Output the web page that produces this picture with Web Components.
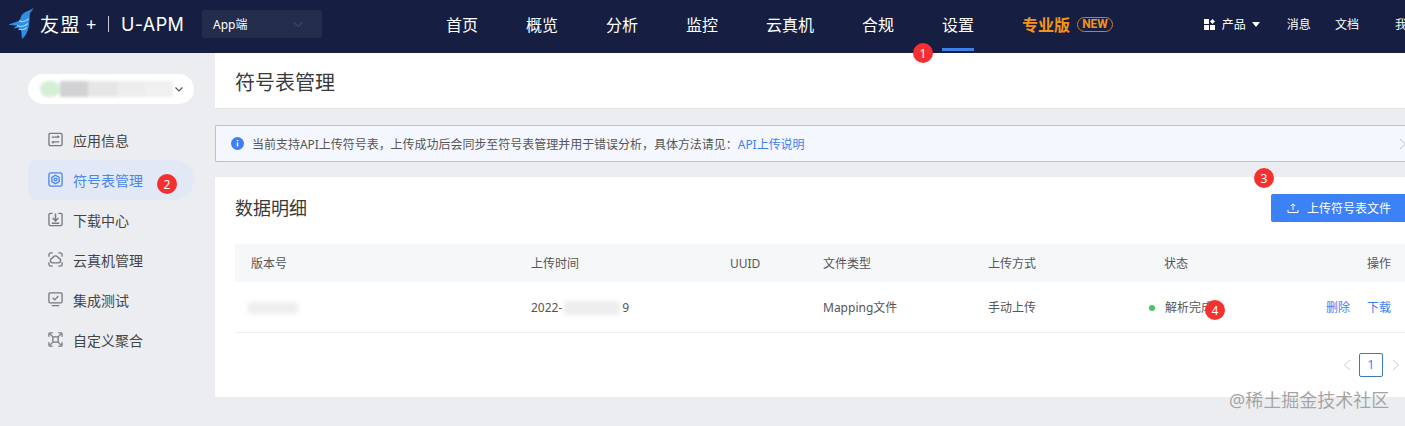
<!DOCTYPE html>
<html lang="zh">
<head>
<meta charset="utf-8">
<title>符号表管理</title>
<style>
  html, body { margin: 0; height: 426px; overflow: hidden; background: #ecedf1; }
  body { position: relative; font-family: "Noto Sans", "Noto Sans CJK SC", sans-serif; color: #333; }
  .layout { display: flex; height: 373px; }
</style>
</head>
<body>
<top-bar></top-bar>
<div class="layout">
  <side-nav>
    <side-item icon="info">应用信息</side-item>
    <side-item icon="symbol" active>符号表管理</side-item>
    <side-item icon="download">下载中心</side-item>
    <side-item icon="cloud">云真机管理</side-item>
    <side-item icon="test">集成测试</side-item>
    <side-item icon="custom">自定义聚合</side-item>
  </side-nav>
  <main-panel>
    <page-head>符号表管理</page-head>
    <info-alert>当前支持API上传符号表，上传成功后会同步至符号表管理并用于错误分析，具体方法请见：<a slot="link">API上传说明</a></info-alert>
    <data-card></data-card>
  </main-panel>
</div>
<num-badge style="left:913px;top:43px">1</num-badge>
<num-badge style="left:157px;top:174px">2</num-badge>
<num-badge style="left:1254px;top:168px">3</num-badge>
<num-badge style="left:1205px;top:300px">4</num-badge>
<water-mark>@稀土掘金技术社区</water-mark>

<script>
const ICONS = {
  info: '<rect x="1" y="1.500" width="14" height="13" rx="1.500"/><path d="M4 5.500h8M10 4l2 1.500M4 10.500h8M6 12l-2-1.500"/>',
  symbol: '<rect x="1" y="1" width="14" height="14" rx="2"/><path d="M8 3.500l3.900 2.250v4.500L8 12.500l-3.900-2.250v-4.500z"/><circle cx="8" cy="8" r="1.500"/>',
  download: '<path d="M5 1.500H2.500a1.500 1.500 0 0 0-1.500 1.500v10a1.500 1.500 0 0 0 1.500 1.500h11A1.500 1.500 0 0 0 15 13V3a1.500 1.500 0 0 0-1.500-1.500H11"/><path d="M8 1.500v7.500M5 6.500 8 9.500l3-3M4 12h8" stroke-width="1.600"/>',
  cloud: '<path d="M1 5V3a2 2 0 0 1 2-2h2M11 1h2a2 2 0 0 1 2 2v2M15 11v2a2 2 0 0 1-2 2h-2M5 15H3a2 2 0 0 1-2-2v-2"/><path d="M5.300 11.500a2.500 2.500 0 0 1-.4-5 3.200 3.200 0 0 1 6.200 0 2.500 2.500 0 0 1-.4 5z"/>',
  test: '<rect x="1" y="1" width="14" height="10.500" rx="1"/><path d="M5 6.200 7.200 8.400 11 4.300M4 14.500h8"/>',
  custom: '<path d="M1 5V2a1 1 0 0 1 1-1h3M11 1h3a1 1 0 0 1 1 1v3M15 11v3a1 1 0 0 1-1 1h-3M5 15H2a1 1 0 0 1-1-1v-3"/><rect x="5.200" y="5.200" width="5.600" height="5.600" rx=".8"/><path d="M2 2l3.200 3.200M14 2l-3.200 3.200M14 14l-3.200-3.200M2 14l3.200-3.200"/>'
};

class TopBar extends HTMLElement {
  connectedCallback() {
    this.attachShadow({ mode: 'open' });
    this.shadowRoot.innerHTML = `
      <style>
        :host { display: flex; align-items: center; box-sizing: border-box; height: 53px; background: #161f41; color: #fff; padding: 0 0 5px 8px; overflow: hidden; white-space: nowrap; }
        .bird { width: 28px; height: 31px; flex: none; margin-bottom: 1px; }
        .brand { flex: none; font-size: 19px; margin-left: 4px; letter-spacing: 1.500px; width: 43px; }
        .plus { flex: none; font-size: 18px; margin-left: 3px; width: 22px; }
        .line { flex: none; width: 1px; height: 16px; background: #c9ccd6; }
        .prod { flex: none; font-family: Inter, sans-serif; font-size: 18px; margin-left: 12px; width: 64px; letter-spacing: .4px; }
        .select { flex: none; display: flex; align-items: center; justify-content: space-between; box-sizing: border-box; width: 120px; height: 28px; margin: 0 0 1px 17px; padding: 0 11px; background: #232c4b; border-radius: 3px; font-size: 12px; }
        .select svg { width: 12px; height: 12px; margin-right: 7px; }
        nav { flex: none; display: flex; align-self: flex-start; gap: 48px; margin-left: 124px; height: 48px; }
        .pro { display: flex; align-items: center; gap: 7px; color: #f39419; font-size: 16px; font-weight: 700; }
        .pro span { font-family: Roboto, sans-serif; font-size: 12px; line-height: 13px; border: 1px solid #cf801c; border-radius: 8px; padding: 0 4px; }
        .tools { flex: none; display: flex; align-items: center; font-size: 12px; margin-left: 91px; }
        .tools svg.grid { width: 11px; height: 11px; margin-right: 7px; }
        .caret { width: 0; height: 0; border: 4px solid transparent; border-top: 5px solid #fff; border-bottom: 0; margin: 0 27px 0 6px; }
        .tools b { font-weight: 400; margin-right: 24px; }
        .tools b:last-child { margin: 0 0 0 12px; }
      </style>
      <svg class="bird" viewBox="0 0 28 32">
        <path d="M26 0c-4 3-8 3-11 6-2 2-3 5-3 7L0 17c3 1 6 1 9 1l-4 3c2 0 4 0 6-1l-1 3c1 0 2 0 3-1l1 10c4-3 6-8 7-13 1-6 1-11 1-13 1-2 3-4 4-6z" fill="#2f8fe6"/>
        <path d="M11 13c3 2 7 1 10-2M9 18c4 2 8 1 11-2M11 22c3 1 6 0 8-2" fill="none" stroke="#a6d8f8" stroke-width="1.200"/>
      </svg>
      <span class="brand">友盟</span><span class="plus">+</span><span class="line"></span>
      <span class="prod">U-APM</span>
      <div class="select">App端
        <svg viewBox="0 0 12 12" fill="none" stroke="#4c5572" stroke-width="1"><path d="M1.500 4 6 8.500 10.500 4"/></svg>
      </div>
      <nav>
        <nav-link>首页</nav-link><nav-link>概览</nav-link><nav-link>分析</nav-link><nav-link>监控</nav-link>
        <nav-link>云真机</nav-link><nav-link>合规</nav-link><nav-link active>设置</nav-link>
        <div class="pro">专业版<span>NEW</span></div>
      </nav>
      <div class="tools">
        <svg class="grid" viewBox="0 0 11 11" fill="#fff"><rect width="5" height="5" y="0"/><rect width="5" height="5" y="6"/><rect width="5" height="5" x="6" y="6"/><path d="M8.500 0 11 2.500 8.500 5 6 2.500z"/></svg>
        产品<i class="caret"></i><b>消息</b><b>文档</b><b>我</b>
      </div>`;
  }
}

class NavLink extends HTMLElement {
  connectedCallback() {
    this.attachShadow({ mode: 'open' });
    this.shadowRoot.innerHTML = `
      <style>
        :host { display: flex; align-items: center; box-sizing: border-box; height: 51px; font-size: 16px; color: #fff; border-bottom: 3px solid transparent; }
        :host([active]) { border-bottom-color: #3f7fe8; }
      </style><slot></slot>`;
  }
}

class SideNav extends HTMLElement {
  connectedCallback() {
    this.attachShadow({ mode: 'open' });
    this.shadowRoot.innerHTML = `
      <style>
        :host { display: block; flex: none; box-sizing: border-box; width: 215px; padding: 21px 21px 0 28px; }
        .app { display: flex; align-items: center; justify-content: space-between; box-sizing: border-box; height: 30px; margin-bottom: 16px; padding: 0 9px 0 12px; background: #fff; border-radius: 15px; }
        .blur { display: flex; width: 134px; height: 16px; filter: blur(1.500px); }
        .blur i { flex: 1; background: #e6e6e6; }
        .blur i:first-child { flex: none; width: 20px; background: #d4efd4; border-radius: 8px; }
        .blur i:nth-child(2) { background: #d2d2d4; }
        .blur i:nth-child(4) { background: #ededed; }
        .blur i:last-child { background: #f0f0f0; }
        svg { width: 12px; height: 12px; }
      </style>
      <div class="app">
        <div class="blur"><i></i><i></i><i></i><i></i><i></i></div>
        <svg viewBox="0 0 12 12" fill="none" stroke="#555" stroke-width="1.200"><path d="M2.500 4.500 6 8l3.500-3.500"/></svg>
      </div>
      <slot></slot>`;
  }
}

class SideItem extends HTMLElement {
  connectedCallback() {
    this.attachShadow({ mode: 'open' });
    this.shadowRoot.innerHTML = `
      <style>
        :host { display: flex; align-items: center; gap: 10px; height: 40px; padding-left: 20px; font-size: 14px; color: #444; border-radius: 8px 20px 20px 8px; }
        :host([active]) { background: #e3e8f6; color: #4a86ec; }
        svg { width: 15px; height: 15px; flex: none; margin-top: -1px; }
        :host(:not([active])) svg { color: #77797d; }
      </style>
      <svg viewBox="0 0 16 16" fill="none" stroke="currentColor" stroke-width="1.400">${ICONS[this.getAttribute('icon')]}</svg>
      <slot></slot>`;
  }
}

class MainPanel extends HTMLElement {
  connectedCallback() {
    this.attachShadow({ mode: 'open' });
    this.shadowRoot.innerHTML = `
      <style>
        :host { display: flex; flex-direction: column; flex: none; width: 1195px; }
      </style><slot></slot>`;
  }
}

class PageHead extends HTMLElement {
  connectedCallback() {
    this.attachShadow({ mode: 'open' });
    this.shadowRoot.innerHTML = `
      <style>
        :host { display: flex; align-items: center; box-sizing: border-box; height: 56px; padding: 1px 20px 0 20px; background: #fff; border-bottom: 1px solid #e3e4e6; font-size: 20px; color: #3a3a3a; }
      </style><slot></slot>`;
  }
}

class InfoAlert extends HTMLElement {
  connectedCallback() {
    this.attachShadow({ mode: 'open' });
    this.shadowRoot.innerHTML = `
      <style>
        :host { display: flex; align-items: center; box-sizing: border-box; height: 37px; margin: 16px 0 15px; padding: 0 0 0 15px; background: #f4f8fe; border: solid #a4c6f3; border-width: 1px 0 1px 1px; border-radius: 2px 0 0 2px; font-size: 12px; letter-spacing: -.03px; color: #555; white-space: nowrap; }
        .icon { width: 13px; height: 13px; margin-right: 8px; flex: none; }
        ::slotted(a) { color: #3d7ff5; }
        .close { width: 8px; height: 12px; position: absolute; left: 1399px; top: 138px; }
      </style>
      <svg class="icon" viewBox="0 0 13 13"><circle cx="6.500" cy="6.500" r="6.500" fill="#3d7ff5"/><path d="M6.500 5.500v4M6.500 3v1.300" stroke="#fff" stroke-width="1.500"/></svg>
      <slot></slot><slot name="link"></slot>
      <svg class="close" viewBox="0 0 8 12" fill="none" stroke="#bcbfc5"><path d="M1 1l5.500 5L1 11"/></svg>`;
  }
}

class DataCard extends HTMLElement {
  connectedCallback() {
    this.attachShadow({ mode: 'open' });
    this.shadowRoot.innerHTML = `
      <style>
        :host { display: block; box-sizing: border-box; height: 220px; padding: 17px 0 0 20px; background: #fff; }
        .head { display: flex; align-items: center; justify-content: space-between; height: 28px; margin-bottom: 22px; font-size: 18px; color: #3a3a3a; }
        .head span { margin-top: -2px; }
        button { display: flex; align-items: center; gap: 8px; height: 28px; border: 0; padding: 0 19px 0 16px; background: #3d81f7; color: #fff; font: inherit; font-size: 12px; border-radius: 2px 0 0 2px; }
        button svg { width: 12px; height: 12px; }
        .pager { display: flex; align-items: center; justify-content: flex-end; height: 24px; margin: 20px 10px 0 0; gap: 8px; }
        .pager svg { width: 8px; height: 12px; }
        .pager b { box-sizing: border-box; width: 24px; height: 24px; margin-right: 1px; border: 1px solid #3d7ab8; border-radius: 2px; color: #3d81f7; font: 12px/22px "Noto Sans", sans-serif; text-align: center; }
        .smudge { display: inline-block; vertical-align: middle; background: #eeeeee; filter: blur(2px); }
        .ver { width: 50px; height: 12px; margin-left: -3px; }
        .date { width: 56px; height: 14px; margin: 0 2px; }
        .dot { display: inline-block; width: 6px; height: 6px; border-radius: 50%; background: #4ac45e; margin: 0 10px 0 -15px; vertical-align: 1px; }
        a { color: #3d7ff5; }
        a + a { margin-left: 17px; }
      </style>
      <div class="head">
        <span>数据明细</span>
        <button>
          <svg viewBox="0 0 12 12" fill="none" stroke="#fff"><path d="M6 8V2M3.800 4 6 1.800 8.200 4M1 8v2.500h10V8"/></svg>
          上传符号表文件
        </button>
      </div>
      <data-row head><span>版本号</span><span>上传时间</span><span>UUID</span><span>文件类型</span><span>上传方式</span><span>状态</span><span>操作</span></data-row>
      <data-row><span><i class="smudge ver"></i></span><span>2022-<i class="smudge date"></i>9</span><span></span><span>Mapping文件</span><span>手动上传</span><span><i class="dot"></i>解析完成</span><span><a>删除</a><a>下载</a></span></data-row>
      <div class="pager">
        <svg viewBox="0 0 8 12" fill="none" stroke="#c8cacf"><path d="M7 1 1.500 6 7 11"/></svg>
        <b>1</b>
        <svg viewBox="0 0 8 12" fill="none" stroke="#c8cacf"><path d="M1 1l5.500 5L1 11"/></svg>
      </div>`;
  }
}

class DataRow extends HTMLElement {
  connectedCallback() {
    this.attachShadow({ mode: 'open' });
    this.shadowRoot.innerHTML = `
      <style>
        :host { display: grid; grid-template-columns: 280px 199px 93px 165px 176px 1fr 120px; align-items: center; height: 50px; font-size: 12px; color: #555; border-bottom: 1px solid #eeeff1; }
        :host([head]) { height: 38px; background: #f6f7f9; border-bottom: 0; }
        ::slotted(span) { padding-left: 16px; white-space: nowrap; }
        ::slotted(span:last-child) { padding: 0 19px 0 0; text-align: right; }
      </style><slot></slot>`;
  }
}

class NumBadge extends HTMLElement {
  connectedCallback() {
    this.attachShadow({ mode: 'open' });
    this.shadowRoot.innerHTML = `
      <style>
        :host { position: absolute; display: flex; align-items: center; justify-content: center; width: 20px; height: 20px; border-radius: 50%; background: #f5302f; color: #fff; font: 12px "Noto Sans", sans-serif; }
      </style><slot></slot>`;
  }
}

class WaterMark extends HTMLElement {
  connectedCallback() {
    this.attachShadow({ mode: 'open' });
    this.shadowRoot.innerHTML = `
      <style>
        :host { position: absolute; left: 1229px; top: 387px; font-size: 18px; line-height: 26px; color: #a3a3a3; white-space: nowrap; text-shadow: 0 0 1px #fff; }
      </style><slot></slot>`;
  }
}

customElements.define('top-bar', TopBar);
customElements.define('nav-link', NavLink);
customElements.define('side-nav', SideNav);
customElements.define('side-item', SideItem);
customElements.define('main-panel', MainPanel);
customElements.define('page-head', PageHead);
customElements.define('info-alert', InfoAlert);
customElements.define('data-card', DataCard);
customElements.define('data-row', DataRow);
customElements.define('num-badge', NumBadge);
customElements.define('water-mark', WaterMark);
</script>
</body>
</html>
